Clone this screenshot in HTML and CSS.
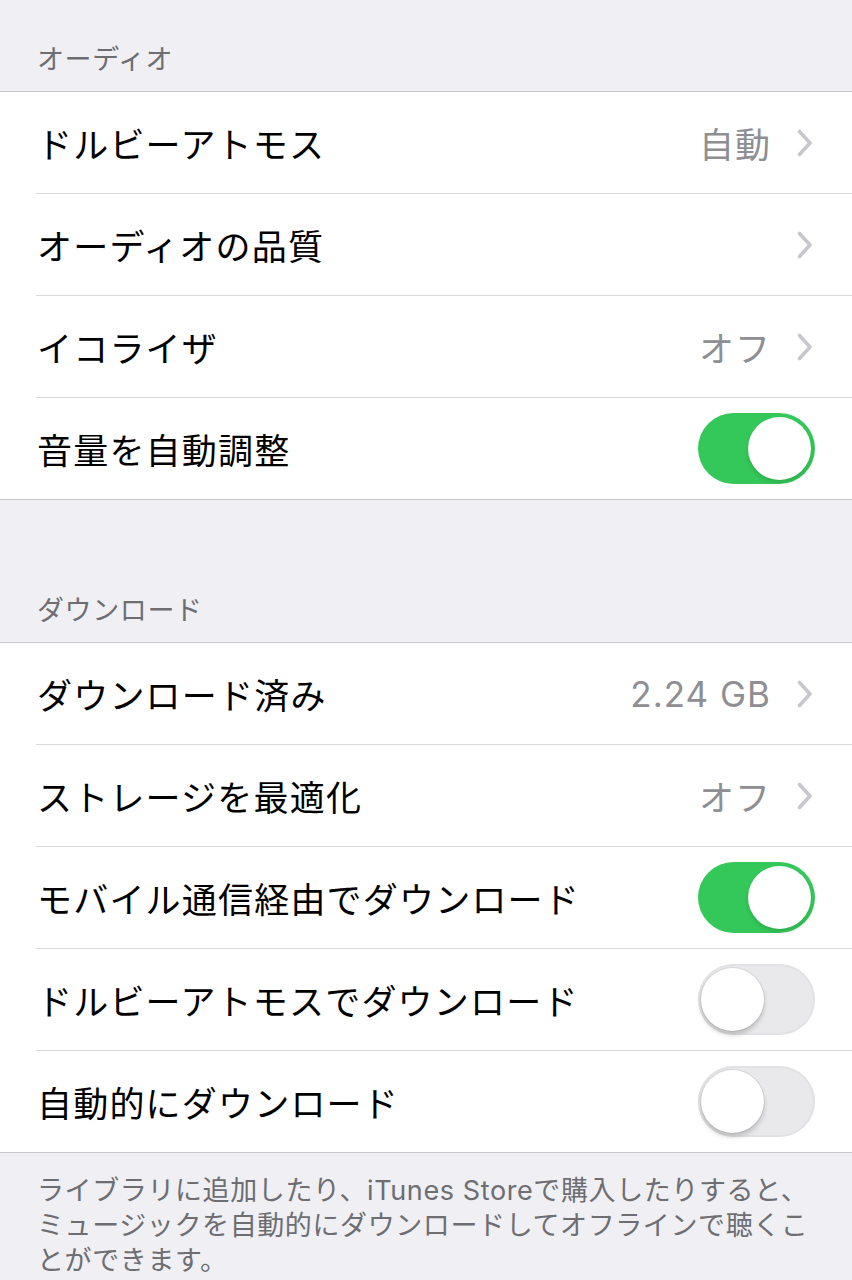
FILE: index.html
```html
<!DOCTYPE html>
<html lang="ja">
<head>
<meta charset="utf-8">
<meta name="viewport" content="width=device-width, initial-scale=1.0">
<title>ミュージック</title>
<link rel="stylesheet" href="styles.css">
</head>
<body>

<div class="settings">
    <div class="section_header first">オーディオ</div>
    <ul class="group">
        <li class="row">
            <div class="row_inner">
                <span class="label">ドルビーアトモス</span>
                <span class="value">自動</span>
                <svg class="chevron" viewBox="0 0 16 28"><path d="M2.5 2.5 L13 14 L2.5 25.5"/></svg>
            </div>
        </li>
        <li class="row">
            <div class="row_inner">
                <span class="label">オーディオの品質</span>
                <svg class="chevron" viewBox="0 0 16 28"><path d="M2.5 2.5 L13 14 L2.5 25.5"/></svg>
            </div>
        </li>
        <li class="row">
            <div class="row_inner">
                <span class="label">イコライザ</span>
                <span class="value">オフ</span>
                <svg class="chevron" viewBox="0 0 16 28"><path d="M2.5 2.5 L13 14 L2.5 25.5"/></svg>
            </div>
        </li>
        <li class="row">
            <div class="row_inner">
                <span class="label">音量を自動調整</span>
                <span class="toggle on"><span class="knob"></span></span>
            </div>
        </li>
    </ul>

    <div class="section_header second">ダウンロード</div>
    <ul class="group">
        <li class="row">
            <div class="row_inner">
                <span class="label">ダウンロード済み</span>
                <span class="value">2.24 GB</span>
                <svg class="chevron" viewBox="0 0 16 28"><path d="M2.5 2.5 L13 14 L2.5 25.5"/></svg>
            </div>
        </li>
        <li class="row">
            <div class="row_inner">
                <span class="label">ストレージを最適化</span>
                <span class="value">オフ</span>
                <svg class="chevron" viewBox="0 0 16 28"><path d="M2.5 2.5 L13 14 L2.5 25.5"/></svg>
            </div>
        </li>
        <li class="row">
            <div class="row_inner">
                <span class="label">モバイル通信経由でダウンロード</span>
                <span class="toggle on"><span class="knob"></span></span>
            </div>
        </li>
        <li class="row">
            <div class="row_inner">
                <span class="label">ドルビーアトモスでダウンロード</span>
                <span class="toggle"><span class="knob"></span></span>
            </div>
        </li>
        <li class="row">
            <div class="row_inner">
                <span class="label">自動的にダウンロード</span>
                <span class="toggle"><span class="knob"></span></span>
            </div>
        </li>
    </ul>
    <p class="section_footer">ライブラリに追加したり、iTunes Storeで購入したりすると、ミュージックを自動的にダウンロードしてオフラインで聴くことができます。</p>
</div>

</body>
</html>
```

FILE: styles.css
```css
*,*:after,*:before{
	box-sizing: border-box;
}
body{
	font-family: Inter, "Noto Sans CJK JP", sans-serif;
	margin: 0;
	background: #efeff4;
	color: #000;
}

.section_header{
	font-size: 27px;
	line-height: 34px;
	letter-spacing: 0.6px;
	color: #6d6d72;
	padding: 0 37px 14px;
}
.section_header.first{
	padding-top: 43px;
}
.section_header.second{
	padding-top: 94px;
}

.group{
	list-style: none;
	margin: 0;
	padding: 0;
	background: #fff;
	border-top: 1px solid #c8c7cc;
	border-bottom: 1px solid #c8c7cc;
}
.row{
	padding-left: 36px;
}
.row_inner{
	display: flex;
	align-items: center;
	height: 102px;
	padding-right: 37px;
	border-bottom: 1px solid #d9d9dd;
}
.row:last-child .row_inner{
	border-bottom: 0;
	height: 101px;
}
.label{
	flex: 1;
	font-size: 35px;
	letter-spacing: 1.2px;
	padding-left: 1px;
	white-space: nowrap;
}
.value{
	font-size: 35px;
	letter-spacing: 1px;
	color: #8e8e93;
	margin-right: 26px;
}
.chevron{
	width: 16px;
	height: 28px;
	margin-right: 2px;
	fill: none;
	stroke: #c7c7cc;
	stroke-width: 3.6;
	stroke-linecap: round;
	stroke-linejoin: round;
}

.toggle{
	display: flex;
	align-items: center;
	width: 117px;
	height: 71px;
	padding: 0 3px;
	border-radius: 36px;
	background: #e9e9eb;
	box-shadow: inset 0 0 0 2px #e2e2e4;
}
.toggle .knob{
	width: 63px;
	height: 63px;
	border-radius: 50%;
	background: #fff;
	box-shadow: 0 4px 5px rgba(0,0,0,0.18), 0 0 0 1px rgba(0,0,0,0.07);
}
.toggle.on{
	background: #34c759;
	box-shadow: none;
	justify-content: flex-end;
	padding: 0 4px;
}
.toggle.on .knob{
	box-shadow: 0 3px 4px rgba(0,0,0,0.12);
}

.section_footer{
	margin: 0;
	padding: 20px 37px 20px;
	font-size: 27px;
	line-height: 35px;
	letter-spacing: 0.6px;
	color: #6d6d72;
}
```
